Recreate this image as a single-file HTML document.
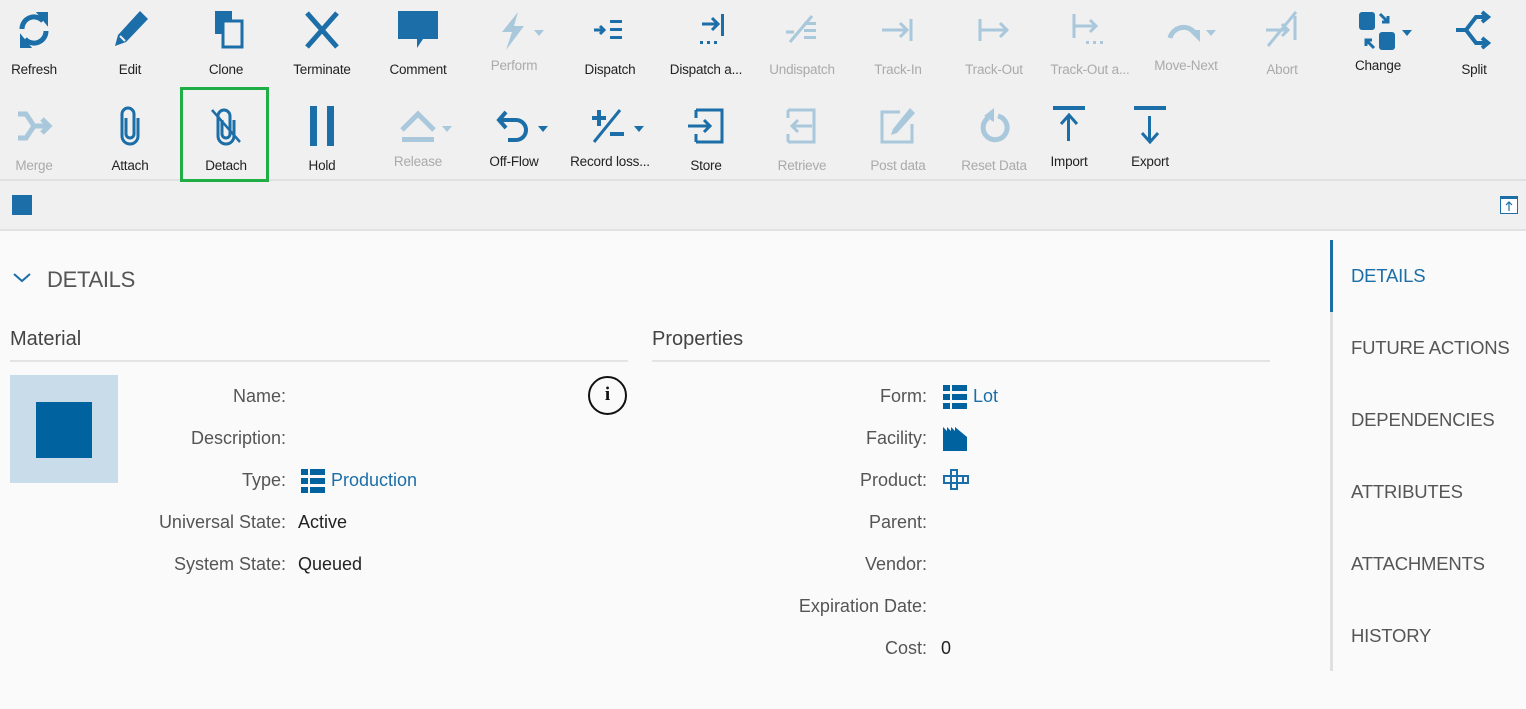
<!DOCTYPE html>
<html><head><meta charset="utf-8">
<style>
*{margin:0;padding:0;box-sizing:border-box}
body{width:1526px;height:709px;background:#fafafa;font-family:"Liberation Sans",sans-serif;position:relative;overflow:hidden}
.tb{position:absolute;left:0;top:0;width:1526px;height:181px;background:#f0f0f0;border-bottom:2px solid #e0e0e0}
.sb{position:absolute;left:0;top:181px;width:1526px;height:50px;background:#f0f0f0;border-bottom:2px solid #e2e2e2}
.b{position:absolute;width:96px;text-align:center}
.b svg{position:absolute;left:28px;top:0}
.b span{position:absolute;left:0;width:96px;font-size:13.5px;color:#222;white-space:nowrap;letter-spacing:-0.2px}
.d span{color:#aaa}
.lab{position:absolute;font-size:18px;color:#555;text-align:right;white-space:nowrap}
.val{position:absolute;font-size:18px;color:#222;white-space:nowrap}
.tab{position:absolute;left:1351px;font-size:18.5px;color:#555;letter-spacing:-0.2px}
</style></head><body>
<div class="tb"></div>
<div class="sb"></div>

<!-- Row 1 -->
<div class="b" style="left:-14px;top:10px"><svg width="40" height="40" viewBox="0 0 40 40" fill="none" stroke="#1b6ea7" stroke-width="5"><path d="M8 19a12 12 0 0 1 21-8"/><path d="M32 21a12 12 0 0 1-21 8"/><path d="M24 3l9 0 0 11z" fill="#1b6ea7" stroke-width="2"/><path d="M16 37l-9 0 0-11z" fill="#1b6ea7" stroke-width="2"/></svg><span style="top:52px">Refresh</span></div>
<div class="b" style="left:82px;top:10px"><svg width="40" height="40" viewBox="0 0 40 40"><path d="M30 1l8 8-22 23-11 4 3-11z" fill="#1b6ea7"/><path d="M10 26l5 5" stroke="#f0f0f0" stroke-width="2"/></svg><span style="top:52px">Edit</span></div>
<div class="b" style="left:178px;top:10px"><svg width="40" height="40" viewBox="0 0 40 40"><rect x="9" y="1" width="17" height="23" fill="#1b6ea7"/><rect x="17" y="11" width="19" height="26" fill="#f0f0f0" stroke="#1b6ea7" stroke-width="3"/></svg><span style="top:52px">Clone</span></div>
<div class="b" style="left:274px;top:10px"><svg width="40" height="40" viewBox="0 0 40 40" stroke="#1b6ea7" stroke-width="5"><path d="M5 3l30 34M35 3L5 37"/></svg><span style="top:52px">Terminate</span></div>
<div class="b" style="left:370px;top:10px"><svg width="40" height="40" viewBox="0 0 40 40"><path d="M0 1h40v28H25l-6 9v-9H0z" fill="#1b6ea7"/></svg><span style="top:52px">Comment</span></div>
<div class="b d" style="left:466px;top:10px"><svg width="40" height="40" viewBox="0 0 40 40"><path d="M24 2L8 22h10l-6 18 18-24H20z" fill="#a9c8dc"/></svg><svg style="left:68px;top:20px" width="10" height="8" viewBox="0 0 10 8"><path d="M0 0h10L5 6z" fill="#a9c8dc"/></svg><span style="top:48px">Perform</span></div>
<div class="b" style="left:562px;top:10px"><svg width="40" height="40" viewBox="0 0 40 40" fill="#1b6ea7"><rect x="20" y="10" width="12" height="3"/><rect x="20" y="18" width="12" height="3"/><rect x="20" y="26" width="12" height="3"/><path d="M4 20h8M10 16l4 4-4 4" stroke="#1b6ea7" stroke-width="3" fill="none"/></svg><span style="top:52px">Dispatch</span></div>
<div class="b" style="left:658px;top:10px"><svg width="40" height="40" viewBox="0 0 40 40" fill="#1b6ea7"><rect x="35" y="4" width="3" height="22"/><path d="M16 14h16M26 8l6 6-6 6" stroke="#1b6ea7" stroke-width="3" fill="none"/><rect x="14" y="31" width="3" height="3"/><rect x="21" y="31" width="3" height="3"/><rect x="28" y="31" width="3" height="3"/></svg><span style="top:52px">Dispatch a...</span></div>
<div class="b d" style="left:754px;top:10px"><svg width="40" height="40" viewBox="0 0 40 40" fill="#a9c8dc"><rect x="22" y="12" width="12" height="3"/><rect x="22" y="19" width="12" height="3"/><rect x="22" y="26" width="12" height="3"/><path d="M8 32L30 6M4 22h8" stroke="#a9c8dc" stroke-width="3"/></svg><span style="top:52px">Undispatch</span></div>
<div class="b d" style="left:850px;top:10px"><svg width="40" height="40" viewBox="0 0 40 40"><path d="M4 20h24M22 13l7 7-7 7M33 9v22" stroke="#a9c8dc" stroke-width="3" fill="none"/></svg><span style="top:52px">Track-In</span></div>
<div class="b d" style="left:946px;top:10px"><svg width="40" height="40" viewBox="0 0 40 40"><path d="M6 9v22M6 20h26M26 13l7 7-7 7" stroke="#a9c8dc" stroke-width="3" fill="none"/></svg><span style="top:52px">Track-Out</span></div>
<div class="b d" style="left:1042px;top:10px"><svg width="40" height="40" viewBox="0 0 40 40"><path d="M4 4v24M4 16h22M20 10l6 6-6 6" stroke="#a9c8dc" stroke-width="3" fill="none"/><g fill="#a9c8dc"><rect x="16" y="31" width="3" height="3"/><rect x="23" y="31" width="3" height="3"/><rect x="30" y="31" width="3" height="3"/></g></svg><span style="top:52px">Track-Out a...</span></div>
<div class="b d" style="left:1138px;top:10px"><svg width="40" height="40" viewBox="0 0 40 40"><path d="M4 28a14 14 0 0 1 24-6" stroke="#a9c8dc" stroke-width="5" fill="none"/><path d="M22 20h12v12z" fill="#a9c8dc"/></svg><svg style="left:68px;top:20px" width="10" height="8" viewBox="0 0 10 8"><path d="M0 0h10L5 6z" fill="#a9c8dc"/></svg><span style="top:48px">Move-Next</span></div>
<div class="b d" style="left:1234px;top:10px"><svg width="40" height="40" viewBox="0 0 40 40"><path d="M4 20h22M20 14l6 6-6 6M33 6v24M6 36L34 2" stroke="#a9c8dc" stroke-width="3" fill="none"/></svg><span style="top:52px">Abort</span></div>
<div class="b" style="left:1330px;top:10px"><svg width="40" height="40" viewBox="0 0 40 40" fill="#1b6ea7"><rect x="1" y="2" width="16" height="18" rx="3"/><rect x="21" y="22" width="16" height="18" rx="3"/><path d="M22 4l8 8M30 6v6h-6M16 38l-8-8M8 36v-6h6" stroke="#1b6ea7" stroke-width="3" fill="none"/></svg><svg style="left:72px;top:20px" width="10" height="8" viewBox="0 0 10 8"><path d="M0 0h10L5 6z" fill="#1b6ea7"/></svg><span style="top:48px">Change</span></div>
<div class="b" style="left:1426px;top:10px"><svg width="40" height="40" viewBox="0 0 40 40" fill="none" stroke="#1b6ea7" stroke-width="4"><path d="M2 20h10l10-13h12M12 20l10 13h12M28 2l6 5-6 5M28 28l6 5-6 5"/></svg><span style="top:52px">Split</span></div>

<!-- Row 2 -->
<div class="b d" style="left:-14px;top:106px"><svg width="40" height="40" viewBox="0 0 40 40" fill="none" stroke="#a9c8dc" stroke-width="5"><path d="M4 8h8l8 12-8 12H4M20 20h14M28 13l7 7-7 7"/></svg><span style="top:52px">Merge</span></div>
<div class="b" style="left:82px;top:106px"><svg width="40" height="40" viewBox="0 0 40 40" fill="none" stroke="#1b6ea7" stroke-width="3"><path d="M16 12v16a4 4 0 0 0 8 0V8a6 6 0 0 0-12 0v22a8 8 0 0 0 16 0V12"/></svg><span style="top:52px">Attach</span></div>
<div class="b" style="left:178px;top:106px"><svg width="40" height="40" viewBox="0 0 40 40" fill="none" stroke="#1b6ea7" stroke-width="3"><path d="M16 14v14a4 4 0 0 0 8 0V10a6 6 0 0 0-12 0v20a8 8 0 0 0 16 0V14"/><path d="M6 4l28 32" stroke-width="2.5"/></svg><span style="top:52px">Detach</span></div>
<div style="position:absolute;left:180px;top:87px;width:89px;height:95px;border:3px solid #1fad45"></div>
<div class="b" style="left:274px;top:106px"><svg width="40" height="40" viewBox="0 0 40 40" fill="#1b6ea7"><rect x="8" y="0" width="7" height="40"/><rect x="25" y="0" width="7" height="40"/></svg><span style="top:52px">Hold</span></div>
<div class="b d" style="left:370px;top:106px"><svg width="40" height="40" viewBox="0 0 40 40"><path d="M4 24L20 8l16 16" stroke="#a9c8dc" stroke-width="5" fill="none"/><rect x="4" y="31" width="32" height="5" fill="#a9c8dc"/></svg><svg style="left:72px;top:20px" width="10" height="8" viewBox="0 0 10 8"><path d="M0 0h10L5 6z" fill="#a9c8dc"/></svg><span style="top:48px">Release</span></div>
<div class="b" style="left:466px;top:106px"><svg width="40" height="40" viewBox="0 0 40 40" fill="none" stroke="#1b6ea7" stroke-width="4"><path d="M6 14h16a10 10 0 0 1 0 20h-8"/><path d="M12 6l-7 8 7 8"/></svg><svg style="left:72px;top:20px" width="10" height="8" viewBox="0 0 10 8"><path d="M0 0h10L5 6z" fill="#1b6ea7"/></svg><span style="top:48px">Off-Flow</span></div>
<div class="b" style="left:562px;top:106px"><svg width="40" height="40" viewBox="0 0 40 40" fill="#1b6ea7"><rect x="2" y="10" width="14" height="4"/><rect x="7" y="4" width="4" height="16"/><rect x="20" y="26" width="14" height="4"/><path d="M4 36L30 4" stroke="#1b6ea7" stroke-width="3"/></svg><svg style="left:72px;top:20px" width="10" height="8" viewBox="0 0 10 8"><path d="M0 0h10L5 6z" fill="#1b6ea7"/></svg><span style="top:48px">Record loss...</span></div>
<div class="b" style="left:658px;top:106px"><svg width="40" height="40" viewBox="0 0 40 40" fill="none" stroke="#1b6ea7" stroke-width="3"><path d="M10 4h26v32H10M10 12V4M10 28v8"/><path d="M2 20h22M18 14l6 6-6 6"/></svg><span style="top:52px">Store</span></div>
<div class="b d" style="left:754px;top:106px"><svg width="40" height="40" viewBox="0 0 40 40" fill="none" stroke="#a9c8dc" stroke-width="3"><path d="M6 4h26v32H6M6 12V4M6 28v8"/><path d="M30 20H10M16 14l-6 6 6 6"/></svg><span style="top:52px">Retrieve</span></div>
<div class="b d" style="left:850px;top:106px"><svg width="40" height="40" viewBox="0 0 40 40"><path d="M22 6H4v30h30V18" stroke="#a9c8dc" stroke-width="3" fill="none"/><path d="M32 2l5 5-18 20-6 2 2-6z" fill="#a9c8dc"/></svg><span style="top:52px">Post data</span></div>
<div class="b d" style="left:946px;top:106px"><svg width="40" height="40" viewBox="0 0 40 40"><path d="M14 12a12 12 0 1 0 10-2" stroke="#a9c8dc" stroke-width="5" fill="none"/><path d="M20 2v14l-10-6z" fill="#a9c8dc"/></svg><span style="top:52px">Reset Data</span></div>
<div class="b" style="left:1021px;top:106px"><svg width="40" height="40" viewBox="0 0 40 40" fill="#1b6ea7"><rect x="4" y="0" width="32" height="4"/><rect x="18" y="10" width="3" height="25"/><path d="M12 18l8-9 8 9" stroke="#1b6ea7" stroke-width="3" fill="none"/></svg><span style="top:48px">Import</span></div>
<div class="b" style="left:1102px;top:106px"><svg width="40" height="40" viewBox="0 0 40 40" fill="#1b6ea7"><rect x="4" y="0" width="32" height="4"/><rect x="18" y="10" width="3" height="25"/><path d="M12 27l8 9 8-9" stroke="#1b6ea7" stroke-width="3" fill="none"/></svg><span style="top:48px">Export</span></div>

<!-- sub bar -->
<div style="position:absolute;left:12px;top:195px;width:20px;height:20px;background:#1b6ea7"></div>
<div style="position:absolute;left:1500px;top:196px;width:18px;height:18px;border:1.5px solid #1b6ea7;border-top-width:3px;background:#fff"></div>
<svg style="position:absolute;left:1500px;top:196px" width="18" height="18" viewBox="0 0 18 18"><path d="M9 15V6M6 9l3-3 3 3" stroke="#1b6ea7" stroke-width="1.2" fill="none"/></svg>

<!-- Details heading -->
<svg style="position:absolute;left:12px;top:272px" width="20" height="12" viewBox="0 0 20 12"><path d="M2 2l8 7 8-7" stroke="#1b6ea7" stroke-width="2" fill="none"/></svg>
<div style="position:absolute;left:47px;top:267px;font-size:22px;color:#555;letter-spacing:-0.3px">DETAILS</div>

<div style="position:absolute;left:10px;top:328px;font-size:20px;color:#444">Material</div>
<div style="position:absolute;left:10px;top:360px;width:618px;height:2px;background:#e4e4e4"></div>
<div style="position:absolute;left:652px;top:328px;font-size:20px;color:#444">Properties</div>
<div style="position:absolute;left:652px;top:360px;width:618px;height:2px;background:#e4e4e4"></div>

<div style="position:absolute;left:10px;top:375px;width:108px;height:108px;background:#c8dcea"></div>
<div style="position:absolute;left:36px;top:402px;width:56px;height:56px;background:#0063a0"></div>
<div style="position:absolute;left:588px;top:376px;width:39px;height:39px;border:2px solid #111;border-radius:50%;text-align:center;font:bold 19px 'Liberation Serif',serif;line-height:34px;color:#111">i</div>

<div class="lab" style="right:1240px;top:386px">Name:</div>
<div class="lab" style="right:1240px;top:428px">Description:</div>
<div class="lab" style="right:1240px;top:470px">Type:</div>
<div class="lab" style="right:1240px;top:512px">Universal State:</div>
<div class="lab" style="right:1240px;top:554px">System State:</div>
<svg style="position:absolute;left:301px;top:469px" width="24" height="24" viewBox="0 0 24 24" fill="#0063a0"><rect x="0" y="0" width="7" height="6"/><rect x="9" y="0" width="15" height="6"/><rect x="0" y="9" width="7" height="6"/><rect x="9" y="9" width="15" height="6"/><rect x="0" y="18" width="7" height="6"/><rect x="9" y="18" width="15" height="6"/></svg>
<div class="val" style="left:331px;top:470px;color:#1b6ea7">Production</div>
<div class="val" style="left:298px;top:512px">Active</div>
<div class="val" style="left:298px;top:554px">Queued</div>

<div class="lab" style="right:599px;top:386px">Form:</div>
<div class="lab" style="right:599px;top:428px">Facility:</div>
<div class="lab" style="right:599px;top:470px">Product:</div>
<div class="lab" style="right:599px;top:512px">Parent:</div>
<div class="lab" style="right:599px;top:554px">Vendor:</div>
<div class="lab" style="right:599px;top:596px">Expiration Date:</div>
<div class="lab" style="right:599px;top:638px">Cost:</div>
<svg style="position:absolute;left:943px;top:385px" width="24" height="24" viewBox="0 0 24 24" fill="#0063a0"><rect x="0" y="0" width="7" height="6"/><rect x="9" y="0" width="15" height="6"/><rect x="0" y="9" width="7" height="6"/><rect x="9" y="9" width="15" height="6"/><rect x="0" y="18" width="7" height="6"/><rect x="9" y="18" width="15" height="6"/></svg>
<div class="val" style="left:973px;top:386px;color:#1b6ea7">Lot</div>
<svg style="position:absolute;left:943px;top:427px" width="24" height="24" viewBox="0 0 24 24"><path d="M0 0l4 4 0-4 4 4 0-4 4 4 0-4 12 10v14H0z" fill="#0063a0"/></svg>
<svg style="position:absolute;left:943px;top:469px" width="26" height="22" viewBox="0 0 26 22" fill="none" stroke="#1b6ea7" stroke-width="2"><rect x="8" y="1" width="6" height="6"/><rect x="1" y="7" width="24" height="7"/><path d="M8 7v7M14 7v7M20 7v7"/><rect x="8" y="14" width="6" height="6"/></svg>
<div class="val" style="left:941px;top:638px">0</div>

<!-- right tabs -->
<div style="position:absolute;left:1330px;top:240px;width:3px;height:431px;background:#e0e0e0"></div>
<div style="position:absolute;left:1330px;top:240px;width:3px;height:72px;background:#1b6ea7"></div>
<div class="tab" style="top:265px;color:#1b6ea7">DETAILS</div>
<div class="tab" style="top:337px">FUTURE ACTIONS</div>
<div class="tab" style="top:409px">DEPENDENCIES</div>
<div class="tab" style="top:481px">ATTRIBUTES</div>
<div class="tab" style="top:553px">ATTACHMENTS</div>
<div class="tab" style="top:625px">HISTORY</div>
</body></html>
